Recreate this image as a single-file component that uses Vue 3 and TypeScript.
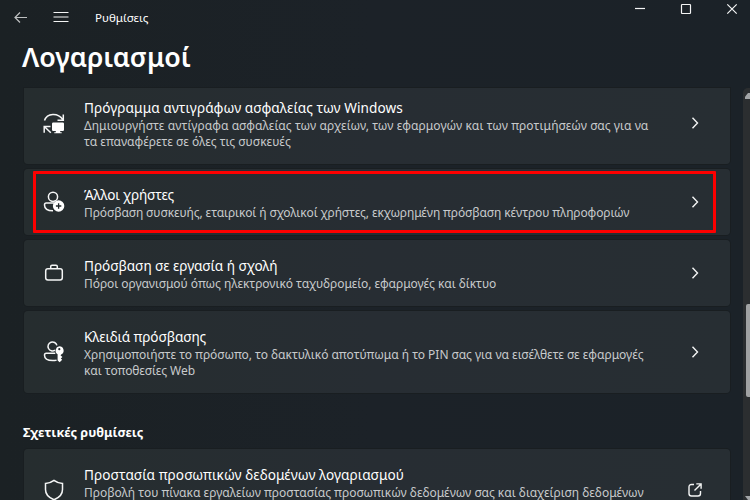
<script setup lang="ts">
interface Line {
  text: string
  tracking: number
}

interface Item {
  icon: string
  title: Line
  lines: Line[]
  size: string
  external?: boolean
}

const accountItems: Item[] = [
  {
    icon: 'backup',
    title: { text: 'Πρόγραμμα αντιγράφων ασφαλείας των Windows', tracking: 0.07 },
    lines: [
      { text: 'Δημιουργήστε αντίγραφα ασφαλείας των αρχείων, των εφαρμογών και των προτιμήσεών σας για να', tracking: 0.065 },
      { text: 'τα επαναφέρετε σε όλες τις συσκευές', tracking: 0 },
    ],
    size: 'first',
  },
  {
    icon: 'users',
    title: { text: 'Άλλοι χρήστες', tracking: -0.15 },
    lines: [{ text: 'Πρόσβαση συσκευής, εταιρικοί ή σχολικοί χρήστες, εκχωρημένη πρόσβαση κέντρου πληροφοριών', tracking: -0.11 }],
    size: 'single highlighted',
  },
  {
    icon: 'work',
    title: { text: 'Πρόσβαση σε εργασία ή σχολή', tracking: -0.04 },
    lines: [{ text: 'Πόροι οργανισμού όπως ηλεκτρονικό ταχυδρομείο, εφαρμογές και δίκτυο', tracking: -0.045 }],
    size: 'single',
  },
  {
    icon: 'passkey',
    title: { text: 'Κλειδιά πρόσβασης', tracking: -0.1 },
    lines: [
      { text: 'Χρησιμοποιήστε το πρόσωπο, το δακτυλικό αποτύπωμα ή το PIN σας για να εισέλθετε σε εφαρμογές', tracking: -0.02 },
      { text: 'και τοποθεσίες Web', tracking: -0.05 },
    ],
    size: 'double',
  },
]

const relatedItems: Item[] = [
  {
    icon: 'shield',
    title: { text: 'Προστασία προσωπικών δεδομένων λογαριασμού', tracking: 0.07 },
    lines: [{ text: 'Προβολή του πίνακα εργαλείων προστασίας προσωπικών δεδομένων σας και διαχείριση δεδομένων', tracking: 0 }],
    size: 'double raised',
    external: true,
  },
]

const groups = [
  { heading: '', items: accountItems },
  { heading: 'Σχετικές ρυθμίσεις', items: relatedItems },
]

const spacing = (line: Line) => ({ letterSpacing: `${line.tracking}px` })
</script>

<template>
  <div class="window">
    <header class="titlebar">
      <svg class="back" width="14" height="12" viewBox="0 0 14 12"><path d="M6 .5 1 5.5l5 5M1 5.5h12" /></svg>
      <svg class="menu" width="16" height="12" viewBox="0 0 16 12"><path d="M.5 .5h15M.5 5h15M.5 9.5h15" /></svg>
      <span class="app-name">Ρυθμίσεις</span>
      <div class="controls">
        <svg width="10" height="10" viewBox="0 0 10 10"><path d="M0 4.5h10" /></svg>
        <svg width="10" height="10" viewBox="0 0 10 10"><rect x=".5" y=".5" width="9" height="9" rx=".7" /></svg>
        <svg width="10" height="10" viewBox="0 0 10 10"><path d="m.3.3 9.4 9.4M9.7.3.3 9.7" /></svg>
      </div>
    </header>
    <h1>Λογαριασμοί</h1>
    <div class="body">
      <main>
        <section v-for="group in groups" :key="group.heading">
          <h2 v-if="group.heading">{{ group.heading }}</h2>
          <article v-for="item in group.items" :key="item.title.text" class="card" :class="item.size">
            <svg class="icon" width="22" height="22" viewBox="0 0 22 22">
              <g v-if="item.icon === 'backup'">
                <path d="M1.5 8.5C4 .8 15 .3 19.8 7.6M20.3 2.5v5.8h-5.8M1.2 20.8v-6.3h6.3M1.8 15l6 5.8" />
                <path class="solid" d="M10.4 10.6h9.4q1.2 0 1.2 1.2v6q0 1.2-1.2 1.2h-2.6v1.3h1.5v1h-7.4v-1h1.5V19h-2.6q-1.2 0-1.2-1.2v-6q0-1.2 1.2-1.2Z" />
              </g>
              <g v-else-if="item.icon === 'users'">
                <circle cx="10" cy="5.8" r="4.6" />
                <path d="M11 12H3.2Q1.5 12 1.5 14c0 4 3 5.8 8.5 5.8" />
                <circle class="solid" cx="15.6" cy="15" r="5.7" />
                <path class="cut" d="M15.6 12.3v5.4M12.9 15h5.4" />
              </g>
              <g v-else-if="item.icon === 'work'">
                <rect x="2.7" y="6.7" width="16.6" height="11.2" rx="2.2" />
                <path d="M7.7 6.5V4.6q0-1.3 1.3-1.3h4q1.3 0 1.3 1.3v1.9" />
              </g>
              <g v-else-if="item.icon === 'passkey'">
                <path d="M12 9.2A4.5 4.5 0 1 1 13.9 4.4" />
                <path d="M12.3 12.3H3.2q-1.7 0-1.7 2c0 3.7 3.3 5.3 8.3 5.3q2.2 0 3.8-.5" />
                <path class="key" fill-rule="evenodd" d="M16.3 5.3a4.3 4.3 0 0 1 2.2 8l-1 1 1.9 1.6-1.6 1.5 1.4 1.4-2.5 2.5-2.1-1.9v-6.2a4.3 4.3 0 0 1 1.7-7.9Zm0 1.8a1.1 1.1 0 1 0 0 2.2 1.1 1.1 0 0 0 0-2.2Z" />
              </g>
              <path v-else d="M11 1.4c2.7 2.1 5.4 2.9 8.5 3v6.2c0 5-3.1 8.1-8.5 10.1-5.4-2-8.5-5.1-8.5-10.1V4.4c3.1-.1 5.8-.9 8.5-3Z" />
            </svg>
            <div class="text">
              <h3 :style="spacing(item.title)">{{ item.title.text }}</h3>
              <p v-for="line in item.lines" :key="line.text" :style="spacing(line)">{{ line.text }}</p>
            </div>
            <svg v-if="item.external" class="action" width="14" height="14" viewBox="0 0 14 14"><path d="M6 1.5H3.5q-2.5 0-2.5 2.5v6.5Q1 13 3.5 13H10q2.5 0 2.5-2.5V8M8.3.9h4.8v4.8M12.8 1.2 6.5 7.5" /></svg>
            <svg v-else class="action" width="14" height="14" viewBox="0 0 14 14"><path d="m4.5 1.8 5 5.2-5 5.2" /></svg>
          </article>
        </section>
      </main>
      <aside class="scrollbar">
        <svg class="arrow" width="7" height="6" viewBox="0 0 7 6"><path d="M2 6V3.8L5 0h2v6Z" /></svg>
        <div class="thumb"></div>
        <svg class="arrow end" width="7" height="4" viewBox="0 0 7 4"><path d="M2 0h5v4H5Z" /></svg>
      </aside>
    </div>
  </div>
</template>

<style>
body {
  margin: 0;
  overflow: hidden;
}
</style>

<style scoped>
* {
  box-sizing: border-box;
  margin: 0;
}
.window {
  width: 750px;
  height: 500px;
  overflow: hidden;
  display: flex;
  flex-direction: column;
  background: linear-gradient(90deg, #1b2124, #1c2228 50%, #1b2228);
  color: #fff;
  font-family: 'Noto Sans', sans-serif;
}
svg {
  display: block;
  flex: none;
  overflow: visible;
  fill: none;
  stroke: #f4f5f5;
  stroke-width: 1.2;
}
.titlebar {
  height: 36px;
  flex: none;
  display: flex;
  align-items: center;
  padding: 0 13px 0 14px;
}
.back {
  opacity: 0.75;
}
.menu {
  margin-left: 25px;
  stroke-width: 1;
}
.app-name {
  margin-left: 26px;
  font-size: 11.6px;
  line-height: 16px;
}
.controls {
  margin-left: auto;
  align-self: flex-start;
  padding-top: 4px;
  display: flex;
  gap: 36px;
}
h1 {
  height: 52px;
  flex: none;
  padding-left: 22px;
  font-size: 26.8px;
  line-height: 42px;
  font-weight: 600;
  white-space: nowrap;
}
.body {
  flex: 1;
  min-height: 0;
  display: flex;
}
main {
  width: 706px;
  margin-left: 24px;
}
section {
  display: flex;
  flex-direction: column;
  gap: 5px;
}
h2 {
  margin: 29px 0 1px -1px;
  height: 21px;
  font-size: 12.7px;
  line-height: 20px;
  font-weight: 700;
  white-space: nowrap;
}
.card {
  position: relative;
  flex: none;
  display: flex;
  align-items: center;
  padding: 0 28px 0 19px;
  border-radius: 4px;
  background: linear-gradient(90deg, #262d2f, #272d33 50%, #272e33);
  box-shadow: 0 0 0 1px #191e21;
}
.first {
  height: 76px;
  padding-bottom: 6px;
  border-radius: 0 0 4px 4px;
}
.single {
  height: 66px;
}
.double {
  height: 82px;
}
.highlighted::after {
  content: '';
  position: absolute;
  inset: 2px 14px 2px 9px;
  border: 3px solid #fe0000;
  border-radius: 1px;
}
.text {
  flex: 1;
  margin-left: 19px;
  padding-top: 1px;
  white-space: nowrap;
}
.raised .text {
  padding-bottom: 16px;
}
h3 {
  margin-bottom: 1px;
  font-size: 13.6px;
  line-height: 19px;
  font-weight: 400;
}
p {
  font-size: 12px;
  line-height: 16px;
  color: #c7cacc;
}
.icon {
  stroke-width: 1.5;
}
.solid,
.key {
  fill: #fff;
  stroke: none;
}
.cut {
  stroke: #20272a;
  stroke-width: 1.3;
}
.action {
  stroke-width: 1.4;
}
.scrollbar {
  margin-left: 13px;
  width: 7px;
  display: flex;
  flex-direction: column;
  align-items: flex-end;
  padding-top: 5px;
  border-radius: 5px 0 0 0;
  background: #2b2e30;
}
.arrow path {
  fill: #a2a5a7;
  stroke: none;
}
.thumb {
  width: 4px;
  height: 93px;
  margin-top: 205px;
  border-radius: 2px 0 0 2px;
  background: #a0a2a3;
}
.end {
  margin-top: auto;
}
</style>
